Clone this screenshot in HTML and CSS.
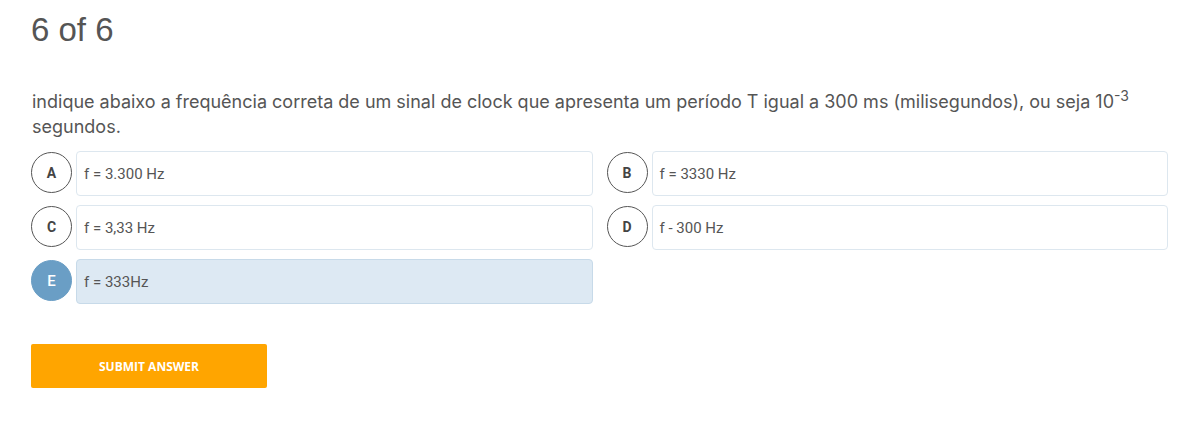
FILE: index.html
```html
<!DOCTYPE html>
<html lang="pt">
<head>
<meta charset="utf-8">
<link rel="stylesheet" href="styles.css">
</head>
<body>
<div class="page">
  <h1 class="counter">6 of 6</h1>
  <p class="question">indique abaixo a frequência correta de um sinal de clock que apresenta um período T igual a 300 ms (milisegundos), ou seja 10<sup>-3</sup> segundos.</p>
  <div class="options">
    <div class="option"><span class="letter">A</span><div class="answer">f = 3.300 Hz</div></div>
    <div class="option"><span class="letter">B</span><div class="answer">f = 3330 Hz</div></div>
    <div class="option"><span class="letter">C</span><div class="answer">f = 3,33 Hz</div></div>
    <div class="option"><span class="letter">D</span><div class="answer">f - 300 Hz</div></div>
    <div class="option selected"><span class="letter">E</span><div class="answer">f = 333Hz</div></div>
  </div>
  <button class="submit">SUBMIT ANSWER</button>
</div>
</body>
</html>
```
FILE: styles.css
```css
html, body { margin: 0; padding: 0; background: #fff; }
.page { padding: 0 23px 0 31px; }
.counter {
  margin: 0;
  padding-top: 11px;
  font-family: "Liberation Sans", Arial, sans-serif;
  font-weight: normal;
  font-size: 33px;
  line-height: 38px;
  color: #555;
}
.question {
  margin: 40px 0 0 1px;
  font-family: Inter, sans-serif;
  font-size: 18px;
  line-height: 25px;
  color: #555;
}
.question sup { font-size: 14px; line-height: 0; vertical-align: 7px; }
.options {
  margin-top: 12px;
  display: grid;
  grid-template-columns: 1fr 1fr;
  column-gap: 14px;
  row-gap: 9px;
}
.option { display: flex; align-items: flex-start; gap: 4px; }
.letter {
  flex: none;
  width: 39px; height: 39px;
  border: 1px solid #555;
  border-radius: 50%;
  display: flex; align-items: center; justify-content: center;
  font-family: Roboto, sans-serif;
  font-weight: bold;
  font-size: 14px;
  color: #444;
  margin-top: 1px;
}
.answer {
  flex: 1;
  height: 43px;
  border: 1px solid #dde7ef;
  border-radius: 4px;
  padding: 0 7px;
  display: flex; align-items: center;
  font-family: Roboto, sans-serif;
  font-size: 15px;
  color: #555;
}
.selected .letter { background: #6a9ec5; border-color: #6a9ec5; color: #fff; font-weight: 500; font-size: 15px; }
.selected .answer { background: #dde9f3; border-color: #c7dae9; }
.submit {
  margin-top: 40px;
  width: 236px; height: 44px;
  background: #ffa500;
  border: none;
  border-radius: 2px;
  color: #fff;
  font-family: "Open Sans", sans-serif;
  font-weight: bold;
  font-size: 12px;
}
```
